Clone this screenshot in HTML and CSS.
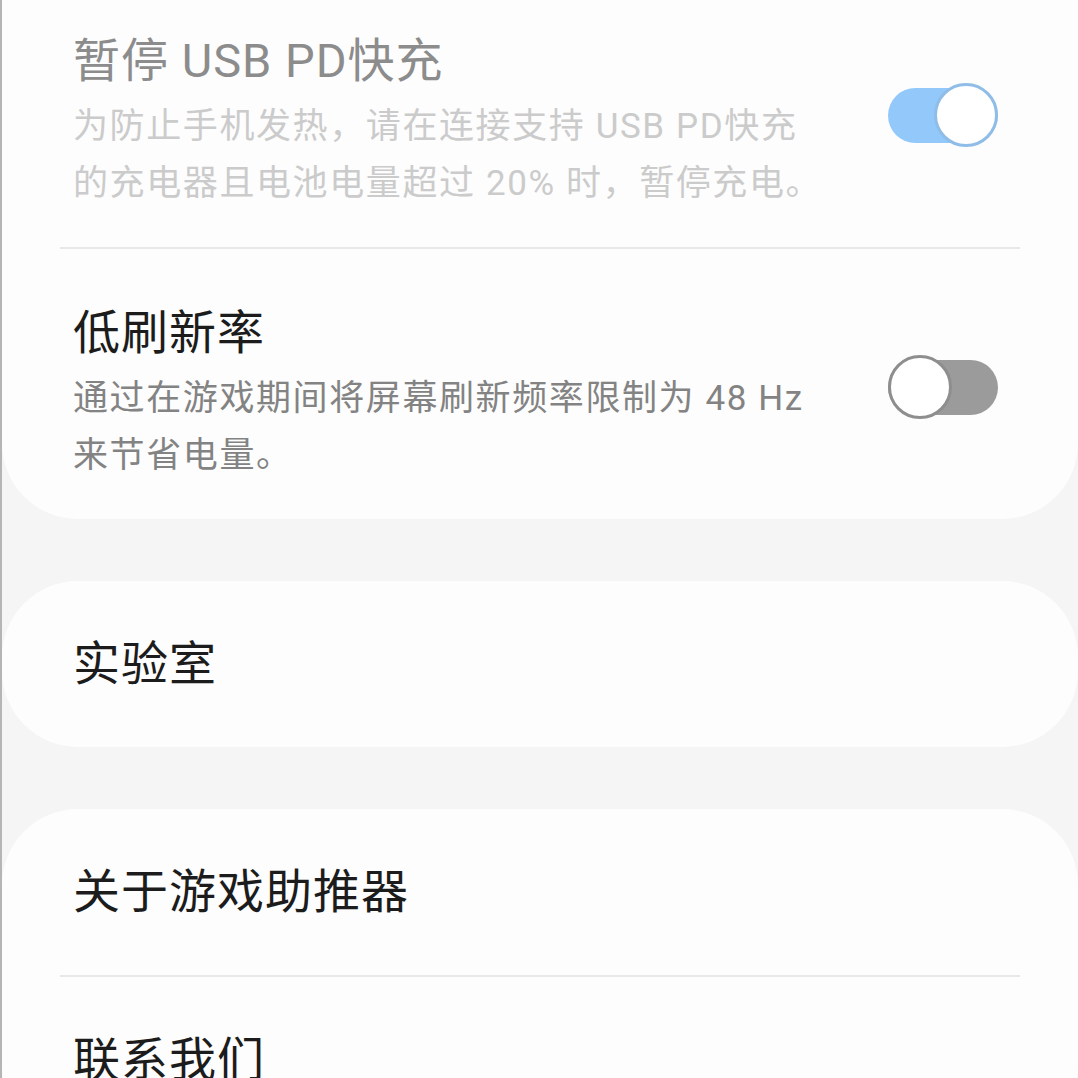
FILE: index.html
```html
<!DOCTYPE html>
<html lang="zh-CN">
<head>
    <meta charset="UTF-8">
    <meta name="viewport" content="width=device-width, initial-scale=1.0">
    <title>游戏助推器</title>
    <link rel="stylesheet" href="styles.css">
</head>
<body>

<div class="page">
    <div class="card first">
        <div class="item disabled">
            <div class="text">
                <div class="title">暂停 USB PD快充</div>
                <div class="sub">为防止手机发热，请在连接支持 USB PD快充<br>的充电器且电池电量超过 20% 时，暂停充电。</div>
            </div>
            <div class="toggle on"><span class="thumb"></span></div>
        </div>
        <div class="divider"></div>
        <div class="item">
            <div class="text">
                <div class="title">低刷新率</div>
                <div class="sub">通过在游戏期间将屏幕刷新频率限制为 48 Hz<br>来节省电量。</div>
            </div>
            <div class="toggle"><span class="thumb"></span></div>
        </div>
    </div>

    <div class="card">
        <div class="item single">
            <div class="title">实验室</div>
        </div>
    </div>

    <div class="card">
        <div class="item single">
            <div class="title">关于游戏助推器</div>
        </div>
        <div class="divider"></div>
        <div class="item single">
            <div class="title">联系我们</div>
        </div>
    </div>
</div>

</body>
</html>
```

FILE: styles.css
```css
html, body {
    margin: 0;
    height: 100%;
    overflow: hidden;
}
body {
    font-family: Roboto, "Noto Sans CJK SC", sans-serif;
    background-color: #f5f5f5;
    border-left: 2px solid #b5b5b5;
}
.page {
    display: flex;
    flex-direction: column;
    gap: 62px;
}
.card {
    background: #fdfdfd;
    border-radius: 76px;
}
.card.first {
    margin-top: -23px;
    border-top-left-radius: 0;
    border-top-right-radius: 0;
}
.item {
    display: flex;
    align-items: center;
    padding: 54px 80px 35px 71px;
}
.item.single {
    padding-top: 53px;
    padding-bottom: 53px;
}
.text {
    flex: 1;
}
.title {
    font-size: 47px;
    line-height: 60px;
    letter-spacing: 1px;
    color: #1c1c1c;
}
.sub {
    margin-top: 7px;
    font-size: 35px;
    line-height: 57px;
    letter-spacing: 1.6px;
    color: #838383;
}
.disabled .title {
    color: #8c8c8c;
}
.disabled .sub {
    color: #cbcbcb;
}
.divider {
    height: 2px;
    margin: 0 58px;
    background: #e8e8e8;
}
.toggle {
    display: flex;
    align-items: center;
    justify-content: flex-start;
    width: 110px;
    height: 55px;
    margin-bottom: 13px;
    border-radius: 28px;
    background: #9b9b9b;
}
.toggle .thumb {
    flex-shrink: 0;
    box-sizing: border-box;
    width: 64px;
    height: 64px;
    border-radius: 50%;
    background: #fff;
    border: 3px solid #8e8e8e;
}
.toggle.on {
    justify-content: flex-end;
    background: #93c8fa;
}
.toggle.on .thumb {
    border-color: #8fbde8;
}
```
